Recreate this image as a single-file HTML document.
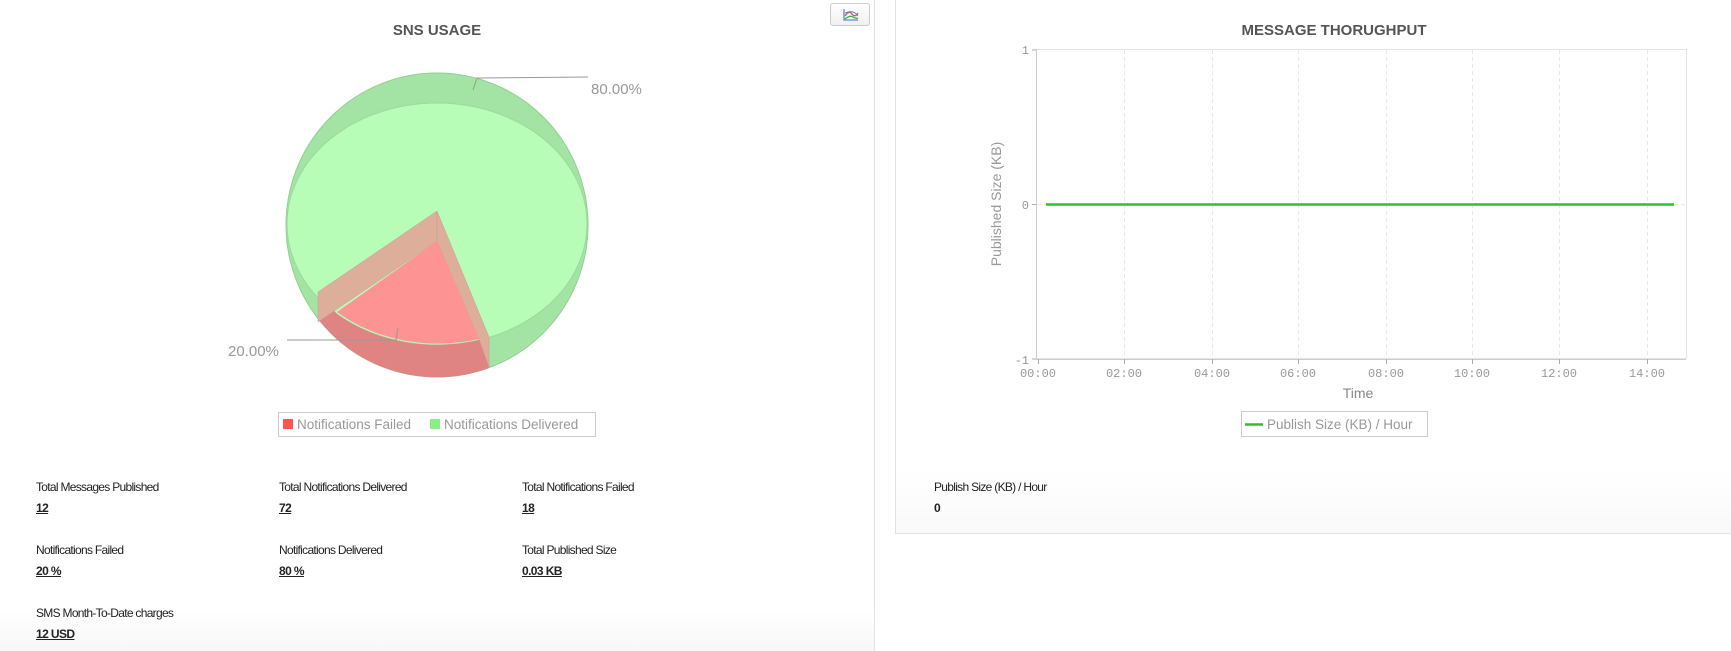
<!DOCTYPE html>
<html><head><meta charset="utf-8"><style>
html,body{margin:0;padding:0;width:1731px;height:651px;overflow:hidden;background:#fff;font-family:"Liberation Sans",sans-serif}
.abs{position:absolute}
.lbl{position:absolute;font-size:12px;color:#222;letter-spacing:-0.7px;white-space:nowrap}
.val{position:absolute;font-size:12px;color:#222;font-weight:bold;text-decoration:underline;letter-spacing:-0.6px}
</style></head><body>
<div class="abs" style="left:0;top:610px;width:874px;height:41px;background:linear-gradient(#fff,#f7f7f7)"></div>
<div class="abs" style="left:874px;top:0;width:1px;height:651px;background:#e3e3e3"></div>
<div class="abs" style="left:895px;top:-1px;width:840px;height:533px;border:1px solid #e2e2e2;background:linear-gradient(#fff 88%,#f9f9f9)"></div>

<div class="abs" style="left:830px;top:3px;width:38px;height:21px;border:1px solid #ccc;border-radius:3px;background:linear-gradient(#fff,#f0f0f0)">
<svg width="38" height="21" viewBox="0 0 38 21"><path d="M13 5 V16 H27" stroke="#5a8ad8" fill="none" stroke-width="1.3"/><path d="M14 12 Q18 6 21 10 T27 9" stroke="#e05050" fill="none" stroke-width="1.3"/><path d="M14 9 Q19 7 22 8 T27 12" stroke="#5a8ad8" fill="none" stroke-width="1"/><path d="M14 15 Q19 11 22 13 T27 14" stroke="#40b040" fill="none" stroke-width="1.3"/></svg></div>

<div class="abs" style="left:337px;top:22px;width:200px;text-align:center;font-weight:bold;font-size:15px;color:#555">SNS USAGE</div>

<svg class="abs" style="left:0;top:0" width="874" height="450">
<ellipse cx="437" cy="225" rx="151" ry="152" fill="#a3e3a3" stroke="#93cf93" stroke-width="1"/>
<ellipse cx="437" cy="224" rx="150" ry="121" fill="#b7fcb7" stroke="#9dd99d" stroke-width="1"/>
<path d="M318,319 A151,152 0 0 0 489,368 L489,337 L479,340 A150,121 0 0 1 337,314 L318,292 Z" fill="#df8383"/>
<path d="M437,211 L318,292 L318,322 L437,241 Z" fill="#ddaf9b" stroke="#c99" stroke-width="0.5"/>
<path d="M437,211 L489,337 L489,367 L479,339 L437,241 Z" fill="#ddaf9b" stroke="#c99" stroke-width="0.5"/>
<path d="M437,241 L337,312 A150,121 0 0 0 479,339 Z" fill="#fd9393"/>
<path d="M473,90 L477,78 L588,77" stroke="#999" fill="none"/>
<path d="M398,328 L396,340 L287,340" stroke="#999" fill="none"/>
<text x="591" y="94" font-size="15" fill="#999" font-family="Liberation Sans">80.00%</text>
<text x="228" y="356" font-size="15" fill="#999" font-family="Liberation Sans">20.00%</text>
<rect x="278.5" y="412.5" width="317" height="24" fill="#fff" stroke="#ccc"/>
<rect x="283" y="419" width="10" height="10" fill="#f55"/>
<text x="297" y="429" font-size="13.5" fill="#999" font-family="Liberation Sans">Notifications Failed</text>
<rect x="430" y="419" width="10" height="10" fill="#8e8"/>
<text x="444" y="429" font-size="13.5" fill="#999" font-family="Liberation Sans">Notifications Delivered</text>
</svg>

<div class="lbl" style="left:36px;top:480px">Total Messages Published</div><div class="val" style="left:36px;top:501px">12</div>
<div class="lbl" style="left:279px;top:480px">Total Notifications Delivered</div><div class="val" style="left:279px;top:501px">72</div>
<div class="lbl" style="left:522px;top:480px">Total Notifications Failed</div><div class="val" style="left:522px;top:501px">18</div>
<div class="lbl" style="left:36px;top:543px">Notifications Failed</div><div class="val" style="left:36px;top:564px">20 %</div>
<div class="lbl" style="left:279px;top:543px">Notifications Delivered</div><div class="val" style="left:279px;top:564px">80 %</div>
<div class="lbl" style="left:522px;top:543px">Total Published Size</div><div class="val" style="left:522px;top:564px">0.03 KB</div>
<div class="lbl" style="left:36px;top:606px">SMS Month-To-Date charges</div><div class="val" style="left:36px;top:627px">12 USD</div>

<div class="abs" style="left:1184px;top:22px;width:300px;text-align:center;font-weight:bold;font-size:15px;color:#555">MESSAGE THORUGHPUT</div>
<svg class="abs" style="left:895px;top:0" width="836" height="450" font-family="Liberation Mono">
<g transform="translate(-895,0)">
<rect x="1036.5" y="49.5" width="650" height="309" fill="none" stroke="#e4e4e4"/>
<g stroke="#e8e8e8" stroke-dasharray="4,3">
<line x1="1124.5" y1="50" x2="1124.5" y2="359"/><line x1="1212.5" y1="50" x2="1212.5" y2="359"/><line x1="1298.5" y1="50" x2="1298.5" y2="359"/><line x1="1386.5" y1="50" x2="1386.5" y2="359"/><line x1="1472.5" y1="50" x2="1472.5" y2="359"/><line x1="1559.5" y1="50" x2="1559.5" y2="359"/><line x1="1647.5" y1="50" x2="1647.5" y2="359"/>
<line x1="1037" y1="204.5" x2="1686" y2="204.5"/>
</g>
<line x1="1036.5" y1="49" x2="1036.5" y2="360" stroke="#ccc"/>
<line x1="1036" y1="359.5" x2="1686" y2="359.5" stroke="#ccc"/>
<g stroke="#aaa"><line x1="1032" y1="50" x2="1036" y2="50"/><line x1="1032" y1="204.5" x2="1036" y2="204.5"/><line x1="1032" y1="359" x2="1036" y2="359"/>
<line x1="1038.5" y1="359" x2="1038.5" y2="364"/><line x1="1124.5" y1="359" x2="1124.5" y2="364"/><line x1="1212.5" y1="359" x2="1212.5" y2="364"/><line x1="1298.5" y1="359" x2="1298.5" y2="364"/><line x1="1386.5" y1="359" x2="1386.5" y2="364"/><line x1="1472.5" y1="359" x2="1472.5" y2="364"/><line x1="1559.5" y1="359" x2="1559.5" y2="364"/><line x1="1647.5" y1="359" x2="1647.5" y2="364"/></g>
<line x1="1046" y1="204.5" x2="1674" y2="204.5" stroke="#2fbf2f" stroke-width="2.5"/>
<g font-size="12" fill="#999" text-anchor="end"><text x="1029" y="54">1</text><text x="1029" y="209">0</text><text x="1029" y="364">-1</text></g>
<g font-size="12" fill="#999" text-anchor="middle"><text x="1038" y="377">00:00</text><text x="1124" y="377">02:00</text><text x="1212" y="377">04:00</text><text x="1298" y="377">06:00</text><text x="1386" y="377">08:00</text><text x="1472" y="377">10:00</text><text x="1559" y="377">12:00</text><text x="1647" y="377">14:00</text></g>
<text x="1358" y="398" font-size="14" fill="#888" text-anchor="middle" font-family="Liberation Sans">Time</text>
<text transform="translate(1001,204) rotate(-90)" font-size="14" fill="#999" text-anchor="middle" font-family="Liberation Sans">Published Size (KB)</text>
<rect x="1241.5" y="411.5" width="186" height="25" fill="#fff" stroke="#ccc"/>
<line x1="1245" y1="424.5" x2="1263" y2="424.5" stroke="#2fbf2f" stroke-width="2.5"/>
<text x="1267" y="429" font-size="13.5" fill="#999" font-family="Liberation Sans">Publish Size (KB) / Hour</text>
</g></svg>
<div class="lbl" style="left:934px;top:480px">Publish Size (KB) / Hour</div><div class="abs" style="left:934px;top:501px;font-size:12px;font-weight:bold;color:#222">0</div>
</body></html>
